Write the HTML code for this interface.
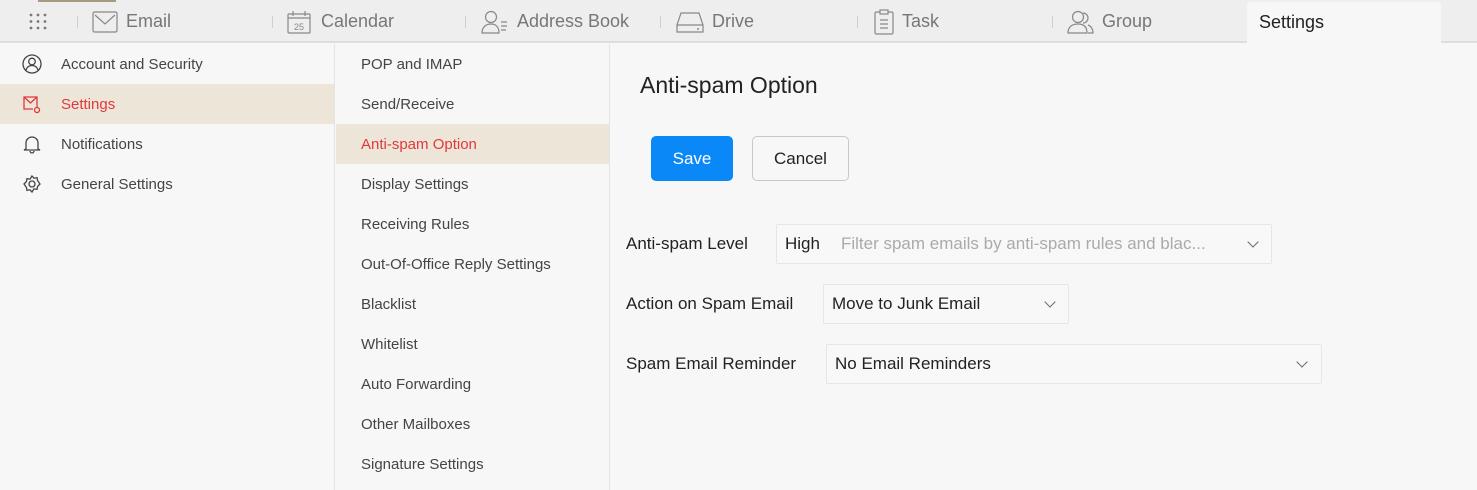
<!DOCTYPE html>
<html><head><meta charset="utf-8"><style>
*{margin:0;padding:0;box-sizing:border-box}
body{width:1477px;height:490px;overflow:hidden;background:#f7f7f7;font-family:"Liberation Sans",Arial,sans-serif;position:relative}
.top{position:absolute;left:0;top:0;width:1477px;height:43px;background:#eeeeee;border-bottom:2px solid #dedede}
.bar{position:absolute;left:38px;top:0;width:78px;height:2px;background:#a89a82}
.tab{position:absolute;top:0;height:43px;display:flex;align-items:center;font-size:18px;color:#777}
.tab svg{margin-right:8px}
.sep{position:absolute;top:16px;width:1px;height:12px;background:#d0d0d0}
.stab{position:absolute;left:1247px;top:2px;width:194px;height:41px;background:#f7f7f7;border-radius:4px 4px 0 0;font-size:18px;color:#222;padding:10px 0 0 12px}
.col1{position:absolute;left:0;top:44px;width:335px;height:446px;border-right:1px solid #e4e4e4}
.col2{position:absolute;left:336px;top:44px;width:274px;height:446px;border-right:1px solid #e4e4e4}
.row{height:40px;display:flex;align-items:center;font-size:15px;color:#444}
.col1 .row{padding-left:22px}
.col1 .row svg{margin-right:19px}
.col2 .row{padding-left:25px}
.sel{background:#ede6d8;color:#e0383e!important}
h1{position:absolute;left:640px;top:72px;font-size:23px;font-weight:normal;color:#222}
.btn{position:absolute;top:136px;height:45px;border-radius:5px;font-size:17px;display:flex;align-items:center;justify-content:center}
.lbl{position:absolute;left:626px;font-size:17px;color:#222}
.sel2{position:absolute;height:40px;border:1px solid #e6e6e6;background:#f8f8f8;border-radius:2px;font-size:17px;color:#222;display:flex;align-items:center;padding-left:8px}
.chev{position:absolute;top:13px;width:8px;height:8px;border-right:1.3px solid #666;border-bottom:1.3px solid #666;transform:rotate(45deg)}
</style></head><body>
<div class="top">
<div class="bar"></div>
<svg style="position:absolute;left:29px;top:13px" width="18" height="17"><g fill="#7a7a7a"><circle cx="2" cy="2" r="1.4"/><circle cx="9" cy="2" r="1.4"/><circle cx="16" cy="2" r="1.4"/><circle cx="2" cy="8.5" r="1.4"/><circle cx="9" cy="8.5" r="1.4"/><circle cx="16" cy="8.5" r="1.4"/><circle cx="2" cy="15" r="1.4"/><circle cx="9" cy="15" r="1.4"/><circle cx="16" cy="15" r="1.4"/></g></svg>
<div class="sep" style="left:77px"></div>
<div class="tab" style="left:92px"><svg width="26" height="22"><rect x="1" y="1" width="24" height="20" rx="1.5" fill="none" stroke="#888" stroke-width="1.2"/><path d="M3 4l10 9 10-9" fill="none" stroke="#888" stroke-width="1.2"/></svg>Email</div>
<div class="sep" style="left:272px"></div>
<div class="tab" style="left:287px"><svg width="26" height="24"><rect x="1" y="4" width="22" height="19" rx="1" fill="none" stroke="#888" stroke-width="1.2"/><path d="M6 1v5M18 1v5M1 8h22" stroke="#888" stroke-width="1.2"/><text x="12" y="20" font-size="9" text-anchor="middle" fill="#888" font-family="Liberation Sans">25</text></svg>Calendar</div>
<div class="sep" style="left:465px"></div>
<div class="tab" style="left:481px"><svg width="28" height="24"><circle cx="10" cy="7" r="5.5" fill="none" stroke="#888" stroke-width="1.2"/><path d="M1 23c0-6 4-9 9-9s8 3 8 9z" fill="none" stroke="#888" stroke-width="1.2"/><path d="M20 12h6M20 16h6M20 20h5" stroke="#888" stroke-width="1.2"/></svg>Address Book</div>
<div class="sep" style="left:660px"></div>
<div class="tab" style="left:676px"><svg width="28" height="22"><path d="M5 2h18l4 12v7H1v-7z" fill="none" stroke="#888" stroke-width="1.2"/><path d="M1 14h26" stroke="#888" stroke-width="1.2"/><circle cx="22" cy="18" r="1" fill="#888"/></svg>Drive</div>
<div class="sep" style="left:857px"></div>
<div class="tab" style="left:874px"><svg width="20" height="26"><rect x="1" y="3" width="18" height="22" rx="1.5" fill="none" stroke="#888" stroke-width="1.2"/><rect x="6" y="1" width="8" height="4" fill="#eee" stroke="#888" stroke-width="1.2"/><path d="M6 11h8M6 15h8M6 19h8" stroke="#888" stroke-width="1.2"/></svg>Task</div>
<div class="sep" style="left:1052px"></div>
<div class="tab" style="left:1066px"><svg width="28" height="24"><circle cx="12" cy="7" r="5.5" fill="none" stroke="#888" stroke-width="1.2"/><path d="M2 23c0-6 4-9 10-9s9 3 9 9z" fill="none" stroke="#888" stroke-width="1.2"/><path d="M17 3a5 5 0 0 1 0 10M22 15c3 1 5 4 5 8h-5" fill="none" stroke="#888" stroke-width="1.2"/></svg>Group</div>
</div>
<div class="stab">Settings</div>

<div class="col1">
<div class="row"><svg width="20" height="20"><circle cx="10" cy="10" r="9" fill="none" stroke="#444" stroke-width="1.3"/><circle cx="10" cy="7.5" r="3.3" fill="none" stroke="#444" stroke-width="1.3"/><path d="M4 16c1-3 3-4.5 6-4.5s5 1.5 6 4.5" fill="none" stroke="#444" stroke-width="1.3"/></svg>Account and Security</div>
<div class="row sel"><svg width="20" height="20"><path d="M15 13V3H2v12h9" fill="none" stroke="#e0383e" stroke-width="1.3"/><path d="M2 3l6.5 6L15 3" fill="none" stroke="#e0383e" stroke-width="1.3"/><circle cx="15" cy="16" r="2.5" fill="none" stroke="#e0383e" stroke-width="1.3"/></svg>Settings</div>
<div class="row"><svg width="20" height="20"><path d="M4 15V9a6 6 0 0 1 12 0v6l2 1H2z" fill="none" stroke="#444" stroke-width="1.3"/><path d="M8 17a2 2 0 0 0 4 0" fill="none" stroke="#444" stroke-width="1.3"/></svg>Notifications</div>
<div class="row"><svg width="20" height="20"><circle cx="10" cy="10" r="3" fill="none" stroke="#444" stroke-width="1.3"/><path d="M10 2l2 2.2 3-.6.6 3L18 10l-2.4 2.4-.6 3-3-.6L10 18l-2-2.2-3 .6-.6-3L2 10l2.4-2.4.6-3 3 .6z" fill="none" stroke="#444" stroke-width="1.3"/></svg>General Settings</div>
</div>

<div class="col2">
<div class="row">POP and IMAP</div>
<div class="row">Send/Receive</div>
<div class="row sel">Anti-spam Option</div>
<div class="row">Display Settings</div>
<div class="row">Receiving Rules</div>
<div class="row">Out-Of-Office Reply Settings</div>
<div class="row">Blacklist</div>
<div class="row">Whitelist</div>
<div class="row">Auto Forwarding</div>
<div class="row">Other Mailboxes</div>
<div class="row">Signature Settings</div>
</div>

<h1>Anti-spam Option</h1>
<div class="btn" style="left:651px;width:82px;background:#0a88f8;color:#fff">Save</div>
<div class="btn" style="left:752px;width:97px;border:1px solid #c8c8c8;color:#222">Cancel</div>

<div class="lbl" style="top:234px">Anti-spam Level</div>
<div class="sel2" style="left:776px;top:224px;width:496px">High<span style="color:#aaa;margin-left:21px">Filter spam emails by anti-spam rules and blac...</span><div class="chev" style="left:472px"></div></div>
<div class="lbl" style="top:294px">Action on Spam Email</div>
<div class="sel2" style="left:823px;top:284px;width:246px">Move to Junk Email<div class="chev" style="left:222px"></div></div>
<div class="lbl" style="top:354px">Spam Email Reminder</div>
<div class="sel2" style="left:826px;top:344px;width:496px">No Email Reminders<div class="chev" style="left:471px"></div></div>
</body></html>
